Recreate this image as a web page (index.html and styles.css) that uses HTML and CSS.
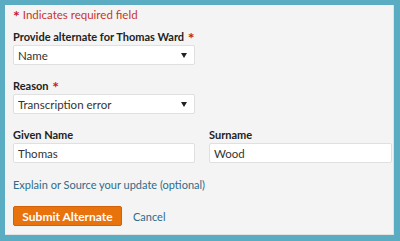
FILE: index.html
```html
<!DOCTYPE html>
<html lang="en">
<head>
    <meta charset="UTF-8">
    <meta name="viewport" content="width=device-width, initial-scale=1.0">
    <title>Provide Alternate</title>
    <link rel="stylesheet" href="styles.css">
</head>
<body>
    <div class="frame">
        <form class="card" id="alternateForm">
            <p class="required-note"><span class="star">*</span> Indicates required field</p>

            <label class="field-label" for="kind">Provide alternate for Thomas Ward <span class="star">*</span></label>
            <div class="select-box">
                <select id="kind" name="kind">
                    <option>Name</option>
                </select>
                <span class="caret"></span>
            </div>

            <label class="field-label" for="reason">Reason <span class="star">*</span></label>
            <div class="select-box">
                <select id="reason" name="reason">
                    <option>Transcription error</option>
                </select>
                <span class="caret"></span>
            </div>

            <div class="name-row">
                <div class="name-col">
                    <label class="field-label" for="given">Given Name</label>
                    <input type="text" id="given" value="Thomas">
                </div>
                <div class="name-col">
                    <label class="field-label" for="surname">Surname</label>
                    <input type="text" id="surname" value="Wood">
                </div>
            </div>

            <a class="explain" href="#">Explain or Source your update (optional)</a>

            <div class="actions">
                <button type="submit">Submit Alternate</button>
                <a class="cancel" href="#">Cancel</a>
            </div>
        </form>
    </div>
</body>
</html>
```

FILE: styles.css
```css
body {
    margin: 0;
    font-family: Lato, "Open Sans", sans-serif;
    background-color: #5aacc2;
}

.frame {
    width: 400px;
    height: 241px;
    box-sizing: border-box;
    padding: 5px 6px 6px 5px;
}

.card {
    height: 100%;
    box-sizing: border-box;
    background-color: #f4f4f4;
    border-right: 1px solid #e2e2e2;
    border-bottom: 1px solid #e2e2e2;
    padding: 3px 0 0 8px;
}

.required-note {
    margin: 0;
    color: #c8342f;
    font-size: 11.5px;
    line-height: 14px;
}

.star {
    color: #c8201c;
    font-weight: bold;
    font-size: 16px;
    line-height: 0;
    vertical-align: -3px;
}

.field-label {
    display: block;
    margin: 14px 0 1px;
    font-size: 11px;
    line-height: 14px;
    font-weight: bold;
    color: #222;
}

.required-note + .field-label {
    margin-top: 8px;
}

.field-label .star {
    margin-left: 1px;
}

.select-box {
    position: relative;
    width: 182px;
}

.select-box select,
.name-col input {
    display: block;
    width: 100%;
    height: 20px;
    box-sizing: border-box;
    margin: 0;
    padding: 0 0 0 4px;
    border: 1px solid #e0e0e0;
    border-radius: 2px;
    background: #fff;
    font-family: inherit;
    font-size: 11.5px;
    color: #333;
    appearance: none;
    -webkit-appearance: none;
}

.caret {
    position: absolute;
    right: 8px;
    top: 8px;
    border-left: 3.5px solid transparent;
    border-right: 3.5px solid transparent;
    border-top: 5px solid #222;
}

.name-row {
    display: flex;
    gap: 14px;
}

.name-col {
    width: 182px;
}

.name-col + .name-col {
    width: 183px;
}

.explain {
    display: block;
    margin-top: 15px;
    font-size: 11px;
    line-height: 14px;
    color: #2f6b8a;
    text-decoration: none;
}

.actions {
    display: flex;
    align-items: center;
    gap: 11px;
    margin-top: 14px;
}

.actions button {
    width: 109px;
    height: 20px;
    padding: 0;
    background-color: #e8720c;
    color: #fff;
    font-family: inherit;
    font-weight: bold;
    font-size: 12px;
    border: 1px solid #d2620a;
    border-radius: 2px;
}

.cancel {
    font-size: 11px;
    color: #2f6b8a;
    text-decoration: none;
}
```
